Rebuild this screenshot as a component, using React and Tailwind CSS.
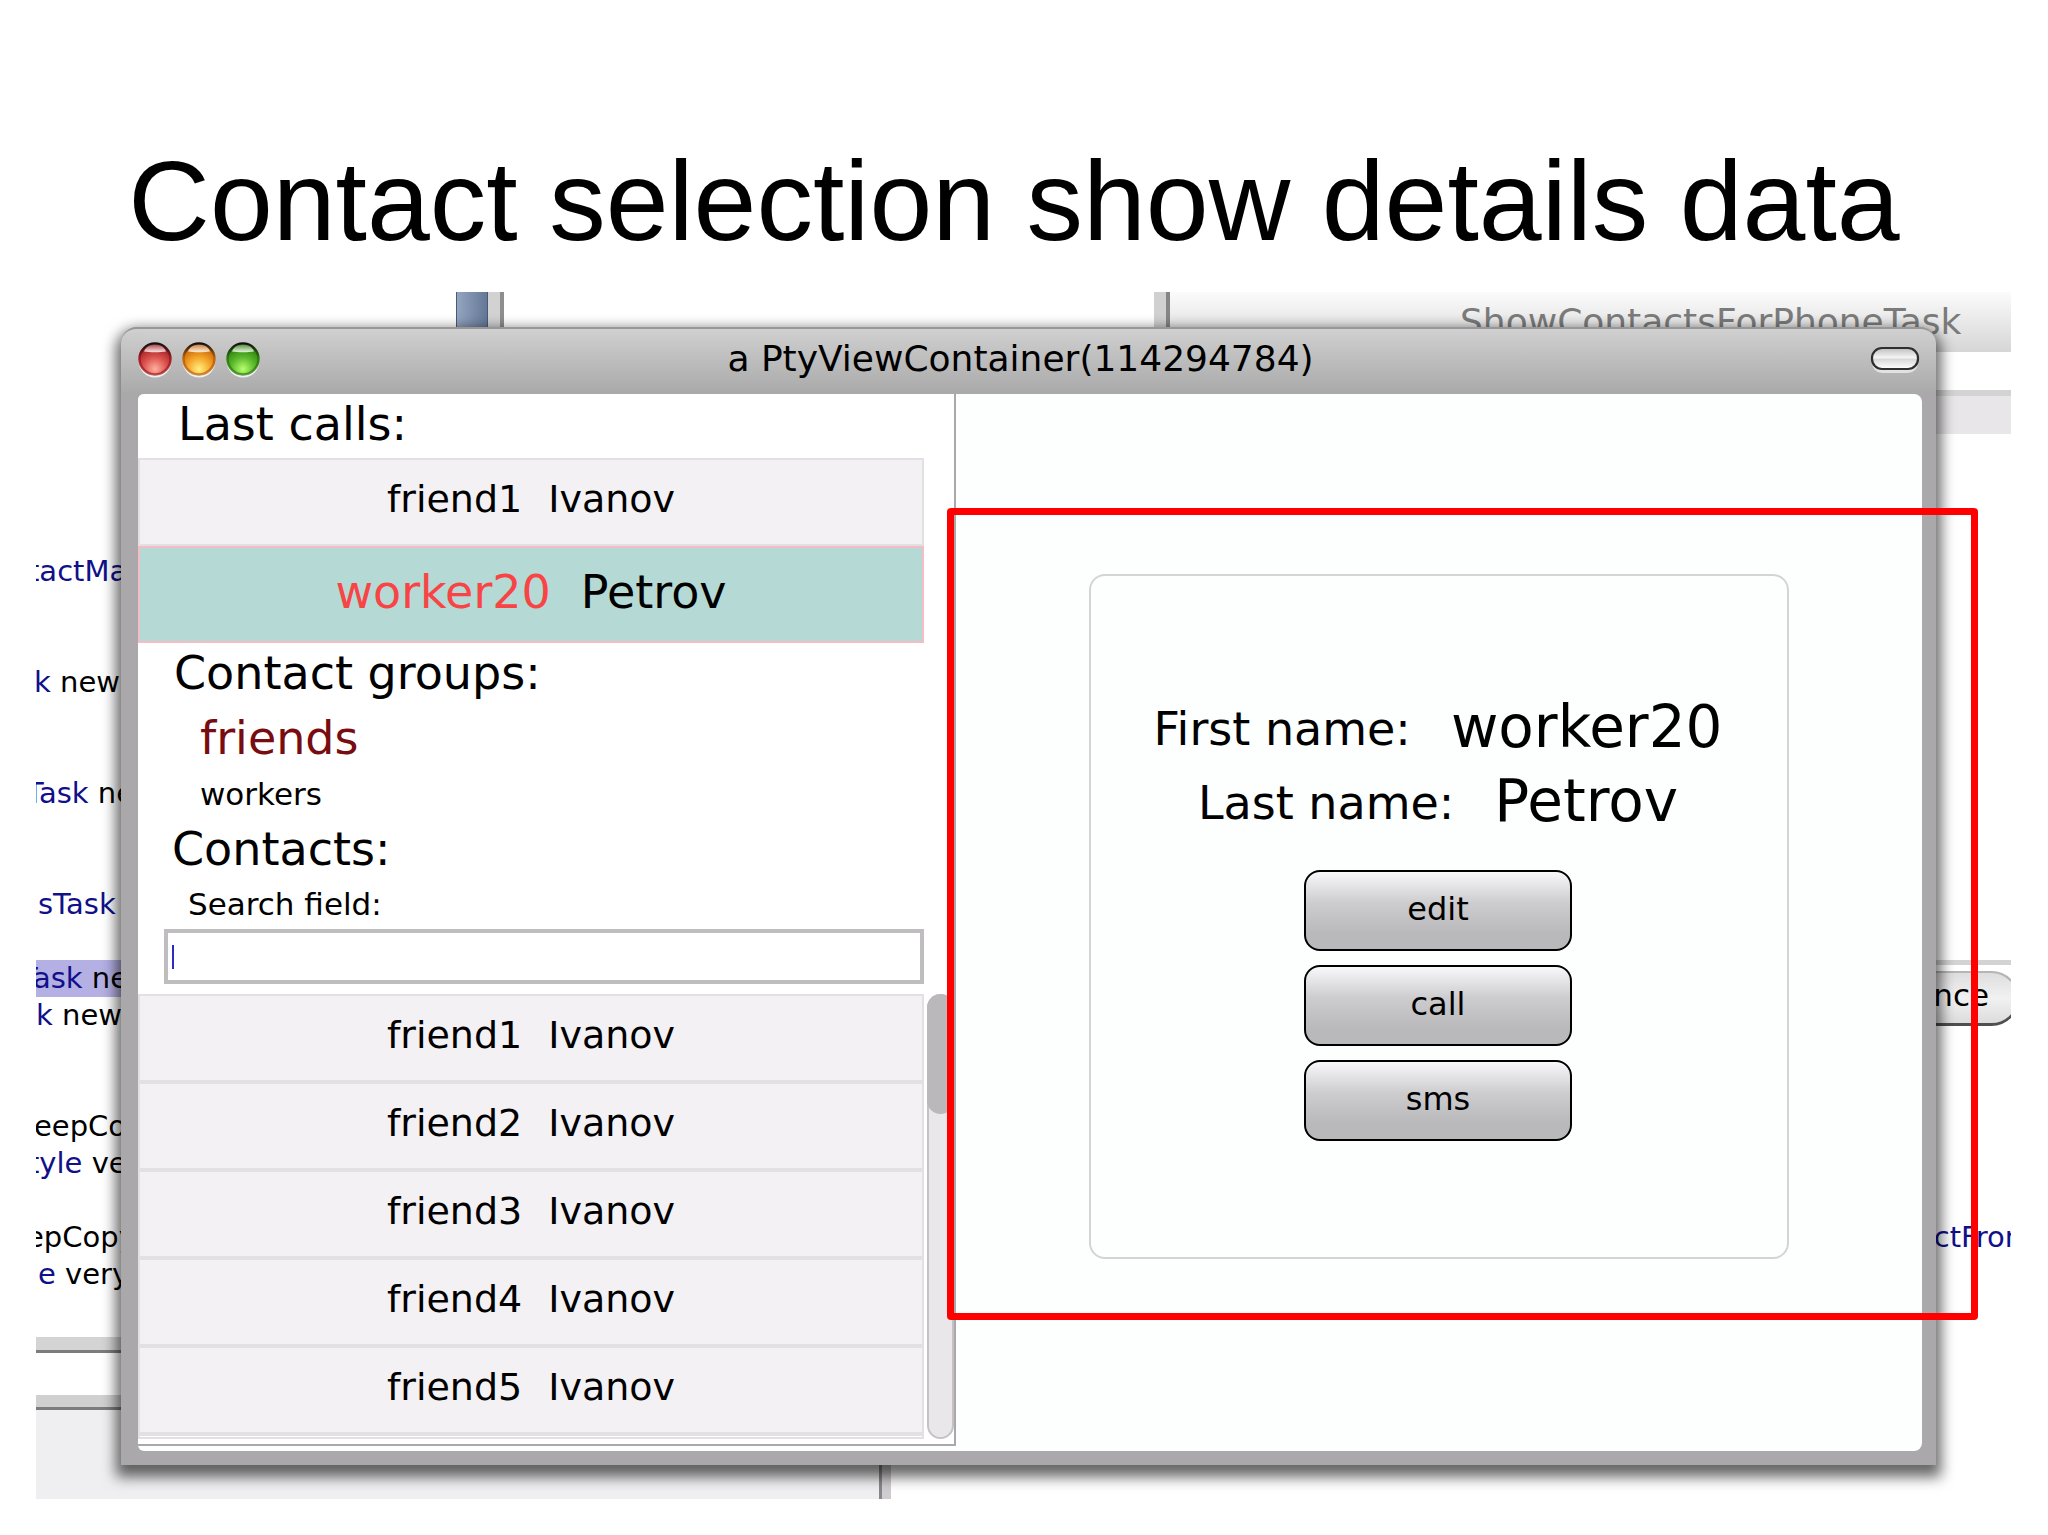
import React, { useState } from 'react';

const LAST_CALLS = [{ first: 'friend1', last: 'Ivanov' }];

const CONTACTS = [
  { first: 'friend1', last: 'Ivanov' },
  { first: 'friend2', last: 'Ivanov' },
  { first: 'friend3', last: 'Ivanov' },
  { first: 'friend4', last: 'Ivanov' },
  { first: 'friend5', last: 'Ivanov' },
];

const SELECTED = { first: 'worker20', last: 'Petrov' };

// Visible slice of the code browser behind the window, blank entries are empty lines
const CODE_LINES = [
  { indent: '-indent-2', link: 'tactMa' },
  {}, {},
  { indent: '-indent-0.5', link: 'k', text: ' new' },
  {}, {},
  { indent: '-indent-2.5', link: 'Task', text: ' new' },
  {}, {},
  { indent: 'indent-0.5', link: 'sTask' },
  {},
  { indent: '-indent-4', link: 'Task', text: ' new', active: true },
  { link: 'k', text: ' new' },
  {}, {},
  { indent: '-indent-0.5', text: 'eepCop' },
  { indent: '-indent-2', link: 'tyle', text: ' very' },
  {},
  { indent: '-indent-2.5', text: 'epCopy' },
  { indent: 'indent-0.5', link: 'e', text: ' very' },
];

const Light = ({ id, label, dark, mid, glow }) => (
  <button type="button" aria-label={label} className="block">
    <svg width="36" height="37" viewBox="0 0 36 37">
      <defs>
        <radialGradient id={`${id}-body`} cx="0.5" cy="0.82" r="0.75">
          <stop offset="0" stopColor={glow} />
          <stop offset="0.5" stopColor={mid} />
          <stop offset="1" stopColor={dark} />
        </radialGradient>
        <linearGradient id={`${id}-rim`} x1="0" y1="0" x2="0" y2="1">
          <stop offset="0" stopColor="#111" />
          <stop offset="0.45" stopColor={dark} />
          <stop offset="1" stopColor={dark} stopOpacity="0.7" />
        </linearGradient>
        <linearGradient id={`${id}-shine`} x1="0" y1="0" x2="0" y2="1">
          <stop offset="0" stopColor="#fff" stopOpacity="0.2" />
          <stop offset="1" stopColor="#fff" stopOpacity="0.85" />
        </linearGradient>
      </defs>
      <circle cx="18" cy="20" r="16.5" fill="#f0f0f0" />
      <circle cx="18" cy="18" r="15.5" fill={`url(#${id}-body)`} stroke={`url(#${id}-rim)`} strokeWidth="2.5" />
      <path d="M7 10.5C9.500 4.500 13.500 3.500 18 3.500s8.500 1 11 7c-5.500 1-16.500 1-22 0z" fill={`url(#${id}-shine)`} />
    </svg>
  </button>
);

const Collapse = () => (
  <button type="button" aria-label="Collapse" className="block">
    <svg width="50" height="30" viewBox="0 0 50 30">
      <defs>
        <linearGradient id="pill" x1="0" y1="0" x2="0" y2="1">
          <stop offset="0" stopColor="#bdbdbd" />
          <stop offset="0.45" stopColor="#f4f4f4" />
          <stop offset="0.55" stopColor="#d9d9d9" />
          <stop offset="1" stopColor="#fff" />
        </linearGradient>
      </defs>
      <rect x="2" y="7" width="46" height="21" rx="10" fill="#e2e2e2" />
      <rect x="2" y="3" width="46" height="21" rx="10" fill="url(#pill)" stroke="#2e2e2e" strokeWidth="2.2" />
    </svg>
  </button>
);

const ContactRow = ({ contact }) => (
  <li>
    <button type="button" className="flex h-[88px] w-full items-center justify-center gap-[26px] border-2 border-[#e2e0e3] bg-[#f3f1f4] pb-1.5 text-[38px] leading-none">
      <span>{contact.first}</span>
      <span>{contact.last}</span>
    </button>
  </li>
);

const Heading = ({ children, className = '' }) => (
  <h2 className={`text-[46px] leading-[60px] ${className}`}>{children}</h2>
);

const Field = ({ label, value }) => (
  <div className="flex items-center justify-center gap-10">
    <dt className="text-[46px] leading-[74px]">{label}</dt>
    <dd className="pb-1 text-[58px] leading-[70px]">{value}</dd>
  </div>
);

const ActionButton = ({ children }) => (
  <button type="button" className="h-[81px] w-[268px] rounded-2xl border-2 border-black bg-linear-to-b from-[#f8f8fa] via-[#cdcdcf] via-40% to-[#b9b9bb] to-80% pb-1 text-[32px] leading-none">
    {children}
  </button>
);

const Backdrop = () => (
  <div className="absolute inset-0 overflow-hidden text-[29px]">
    {/* Top edges of the browser panes */}
    <div className="absolute left-[420px] top-0 flex h-10">
      <div className="w-8 border-x border-[#4a5a78] bg-linear-to-r from-[#94a5c0] to-[#647897]" />
      <div className="w-3 bg-[#d2d2d2]" />
      <div className="w-1 bg-[#8e8e8e]" />
    </div>
    <div className="absolute left-[1118px] right-0 top-0">
      <div className="h-[60px] border-l-[12px] border-[#d0d0d0]">
        <div className="h-full border-l-4 border-[#858585] bg-linear-to-b from-[#fbfbfb] to-[#d6d6d6] pl-[290px] pt-[7px] text-[36px] leading-[46px] text-[#7b7b7b]">
          ShowContactsForPhoneTask
        </div>
      </div>
      <div className="mt-[38px] h-11 border-t-[6px] border-[#d3d3d3] bg-[#e8e6e8]" />
    </div>

    {/* Code pane */}
    <div className="absolute left-0 top-[261px] w-[120px] overflow-hidden">
      {CODE_LINES.map((line, i) => (
        <p key={i} className={`h-[37px] whitespace-pre leading-[37px] ${line.indent || ''} ${line.active ? 'bg-[#b4b0e4]' : ''}`}>
          <span className="text-[#10108a]">{line.link}</span>{line.text}
        </p>
      ))}
    </div>

    {/* Bottom left panes */}
    <div className="absolute bottom-0 left-0 w-[855px] border-r-[9px] border-[#cfcdd0]">
      <div className="h-4 border-b-[3px] border-[#7c7c7c] bg-[#d4d4d4]" />
      <div className="h-[42px] bg-white" />
      <div className="h-[15px] border-b-[3px] border-[#7c7c7c] bg-[#d0d0d0]" />
      <div className="h-[89px] border-r-[3px] border-[#88868a] bg-[#efeef0]" />
    </div>

    {/* Right side leftovers */}
    <div className="absolute left-[1880px] right-0 top-[668px]">
      <div className="h-[5px] bg-[#d3d3d3]" />
      <button type="button" className="-mr-2 mt-[6px] flex h-[55px] w-[103px] items-center justify-end rounded-r-full border-2 border-b-[3px] border-[#b5b5b5] border-b-[#4f4f4f] bg-linear-to-b from-[#dedede] via-[#f1f1f1] to-[#dcdcdc] pb-1.5 pr-7 text-[31px] leading-none">
        <span>ence</span>
      </button>
      <p className="mt-[193px] whitespace-nowrap leading-[37px] text-[#10108a]">actFrom</p>
    </div>
  </div>
);

export default function App() {
  const [query, setQuery] = useState('');

  return (
    <main className="overflow-hidden bg-white pb-9 font-['DejaVu_Sans',sans-serif] text-black">
      <h1 className="pr-5 pt-[135px] text-center font-['Liberation_Sans',sans-serif] text-[113px] leading-[132px]">
        Contact selection show details data
      </h1>

      <div className="relative ml-9 mr-[37px] mt-[25px] pb-[34px] pl-[85px] pr-[75px] pt-[35px]">
        <Backdrop />

        <section className="relative rounded-t-2xl bg-[#aaa8ab] px-[14px] pb-[14px] shadow-[0_7px_14px_5px_rgba(0,0,0,0.6)]">
          <header className="-mx-[14px] flex h-[67px] items-center justify-between rounded-t-2xl border-t-2 border-[#979797] bg-linear-to-b from-[#d0d0d0] to-[#a9a9a9] px-4 pb-1">
            <div className="flex w-36 gap-2">
              <Light id="close" label="Close" dark="#a01c20" mid="#dc5450" glow="#ffb0a0" />
              <Light id="menu" label="Menu" dark="#c06008" mid="#f5a428" glow="#fff080" />
              <Light id="zoom" label="Expand" dark="#2c7a0c" mid="#5cba2c" glow="#b8ff70" />
            </div>
            <p className="pb-0.5 text-[36px] leading-none">a PtyViewContainer(114294784)</p>
            <div className="flex w-40 justify-end">
              <Collapse />
            </div>
          </header>

          <div className="ml-[3px] flex overflow-hidden rounded-lg rounded-l-md bg-[#fdfefe]">
            <aside className="mb-[5px] w-[818px] shrink-0 border-b-2 border-r-2 border-[#aaa8ab] bg-white">
              <div className="mr-[30px]">
                <Heading className="pb-1 pl-10">Last calls:</Heading>
                <ul>
                  {LAST_CALLS.map((c) => <ContactRow key={c.first} contact={c} />)}
                  <li>
                    <button type="button" className="flex h-[97px] w-full items-center justify-center gap-[30px] border-2 border-[#f5bcc6] bg-[#b5d9d4] pb-1.5 text-[46px] leading-none">
                      <span className="text-[#f84444]">{SELECTED.first}</span>
                      <span>{SELECTED.last}</span>
                    </button>
                  </li>
                </ul>

                <Heading className="pl-9">Contact groups:</Heading>
                <ul className="pl-[62px]">
                  <li><button type="button" className="block text-[46px] leading-[70px] text-[#780c10]">friends</button></li>
                  <li><button type="button" className="block text-[31px] leading-[42px]">workers</button></li>
                </ul>

                <Heading className="pl-[34px] pt-1">Contacts:</Heading>
                <label htmlFor="search" className="block pl-[50px] text-[31px] leading-[50px]">Search field:</label>
                <div className="relative ml-[26px]">
                  <input
                    id="search"
                    type="text"
                    value={query}
                    onChange={(e) => setQuery(e.target.value)}
                    className="block h-[55px] w-full border-4 border-[#bfbdc0] bg-white px-1 text-[31px] outline-none"
                  />
                  {query === '' && <span className="pointer-events-none absolute left-2 top-4 h-6 w-0.5 bg-[#2c2cc4]" />}
                </div>
              </div>

              <div className="mt-[10px] flex gap-[3px] pb-[5px]">
                <ul className="h-[445px] flex-1 overflow-hidden border-b-2 border-[#e2e0e3]">
                  {CONTACTS.map((c) => <ContactRow key={c.first} contact={c} />)}
                  <li className="h-2 border-2 border-[#e2e0e3]" />
                </ul>
                <div className="w-[27px] rounded-full border-2 border-[#c4c2c5] bg-[#e9e7ea]">
                  <div className="-mx-[2px] -mt-[2px] h-[120px] rounded-full bg-[#bab8bb]" />
                </div>
              </div>
            </aside>

            <div className="flex flex-1 items-center justify-center pb-3">
              <article className="flex h-[685px] w-[700px] flex-col items-center justify-center rounded-2xl border-2 border-[#d4d4d4] pr-0.5">
                <dl>
                  <Field label="First name:" value={SELECTED.first} />
                  <Field label="Last name:" value={SELECTED.last} />
                </dl>
                <div className="mt-[30px] flex flex-col gap-[14px]">
                  <ActionButton>edit</ActionButton>
                  <ActionButton>call</ActionButton>
                  <ActionButton>sms</ActionButton>
                </div>
              </article>
            </div>
          </div>
        </section>

        {/* Highlight over the details pane */}
        <div className="pointer-events-none absolute bottom-[179px] left-[911px] right-[33px] top-[216px] rounded-sm border-[7px] border-[#ff0000]" />
      </div>
    </main>
  );
}
